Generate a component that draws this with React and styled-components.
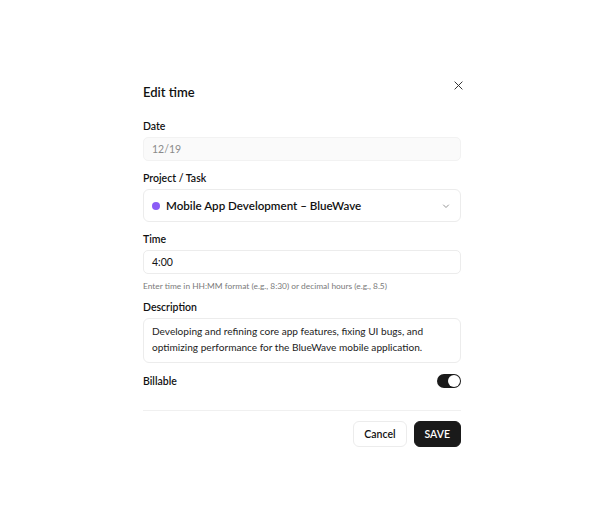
import React, {useState} from 'react';
import styled, {createGlobalStyle} from 'styled-components';

const GlobalStyle = createGlobalStyle`
  html, body {
    margin: 0;
    padding: 0;
    background: #ffffff;
  }
  body {
    font-family: Lato, "Noto Sans", sans-serif;
    color: #111111;
  }
  * { box-sizing: border-box; }
`;

const Page = styled.div`
  width: 604px;
  height: 531px;
  display: flex;
  justify-content: center;
  padding-top: 78px;
`;

const Dialog = styled.div`
  width: 318px;
  display: flex;
  flex-direction: column;
`;

const Header = styled.div`
  display: flex;
  justify-content: space-between;
  align-items: flex-start;
  height: 41px;
`;

const Title = styled.h2`
  margin: 5px 0 0;
  font-size: 13px;
  font-weight: 600;
  line-height: 18px;
`;

const CloseButton = styled.button`
  border: 0;
  background: none;
  padding: 0;
  margin: 0 -4px 0 0;
  width: 14px;
  height: 14px;
  display: flex;
  align-items: center;
  justify-content: center;
  color: #333;
  cursor: pointer;
`;

const Field = styled.div`
  display: flex;
  flex-direction: column;
  margin-bottom: ${p => p.$gap || 10}px;
`;

const Label = styled.label`
  font-size: 10.5px;
  font-weight: 600;
  line-height: 14px;
  margin-bottom: 4px;
`;

const Input = styled.div`
  height: 24px;
  border: 1px solid ${p => p.$muted ? '#f2f2f2' : '#ececec'};
  border-radius: 5px;
  background: ${p => p.$muted ? '#fafafa' : '#fff'};
  color: ${p => p.$muted ? '#8a8a8a' : '#111'};
  font-size: 10.5px;
  display: flex;
  align-items: center;
  padding: 0 8px;
`;

const Select = styled.div`
  height: 33px;
  border: 1px solid #ececec;
  border-radius: 6px;
  display: flex;
  align-items: center;
  padding: 0 10px 0 8px;
  gap: 6px;
`;

const Dot = styled.span`
  width: 8px;
  height: 8px;
  border-radius: 50%;
  background: ${p => p.$color};
  flex-shrink: 0;
`;

const SelectText = styled.span`
  flex: 1;
  font-size: 11.6px;
  font-weight: 600;
`;

const Hint = styled.div`
  font-size: 8.4px;
  color: #7a7a7a;
  margin-top: 6px;
  line-height: 12px;
`;

const TextArea = styled.div`
  border: 1px solid #ececec;
  border-radius: 6px;
  padding: 4px 8px 5px;
  font-size: 10.1px;
  line-height: 16px;
  color: #222;
  min-height: 45px;
`;

const Row = styled.div`
  display: flex;
  justify-content: space-between;
  align-items: center;
  height: 16px;
`;

const RowLabel = styled.span`
  font-size: 10.5px;
  font-weight: 600;
`;

const Toggle = styled.button`
  width: 24px;
  height: 14px;
  border-radius: 7px;
  border: 0;
  padding: 0;
  background: ${p => p.$on ? '#1a1a1a' : '#d4d4d4'};
  position: relative;
  cursor: pointer;
  &::after {
    content: '';
    position: absolute;
    top: 1px;
    left: ${p => p.$on ? '11px' : '1px'};
    width: 12px;
    height: 12px;
    border-radius: 50%;
    background: #fff;
  }
`;

const Divider = styled.hr`
  border: 0;
  border-top: 1px solid #f0f0f0;
  margin: 21px 0 10px;
`;

const Footer = styled.div`
  display: flex;
  justify-content: flex-end;
  gap: 7px;
`;

const Button = styled.button`
  height: 26px;
  padding: 0 ${p => p.$primary ? '10px' : '10px'};
  border-radius: 6px;
  border: 1px solid ${p => p.$primary ? '#1a1a1a' : '#ececec'};
  background: ${p => p.$primary ? '#1a1a1a' : '#fff'};
  color: ${p => p.$primary ? '#fff' : '#111'};
  font-family: inherit;
  font-size: 10.5px;
  font-weight: 600;
  cursor: pointer;
`;

export default function App() {
  const [billable, setBillable] = useState(true);
  return (
    <>
      <GlobalStyle />
      <Page>
        <Dialog>
          <Header>
            <Title>Edit time</Title>
            <CloseButton aria-label="Close">
              <svg width="9" height="9" viewBox="0 0 10 10">
                <path d="M1 1L9 9M9 1L1 9" stroke="#333" strokeWidth="1.1" strokeLinecap="round" />
              </svg>
            </CloseButton>
          </Header>

          <Field>
            <Label>Date</Label>
            <Input $muted>12/19</Input>
          </Field>

          <Field>
            <Label>Project / Task</Label>
            <Select>
              <Dot $color="#8b5cf6" />
              <SelectText>Mobile App Development – BlueWave</SelectText>
              <svg width="8" height="8" viewBox="0 0 8 8">
                <path d="M1.5 3L4 5.5L6.5 3" fill="none" stroke="#888" strokeWidth="0.9" strokeLinecap="round" strokeLinejoin="round" />
              </svg>
            </Select>
          </Field>

          <Field $gap={8}>
            <Label>Time</Label>
            <Input>4:00</Input>
            <Hint>Enter time in HH:MM format (e.g., 8:30) or decimal hours (e.g., 8.5)</Hint>
          </Field>

          <Field>
            <Label>Description</Label>
            <TextArea>
              Developing and refining core app features, fixing UI bugs, and optimizing performance for the BlueWave mobile application.
            </TextArea>
          </Field>

          <Row>
            <RowLabel>Billable</RowLabel>
            <Toggle $on={billable} onClick={() => setBillable(!billable)} aria-label="Billable" />
          </Row>

          <Divider />

          <Footer>
            <Button>Cancel</Button>
            <Button $primary>SAVE</Button>
          </Footer>
        </Dialog>
      </Page>
    </>
  );
}
